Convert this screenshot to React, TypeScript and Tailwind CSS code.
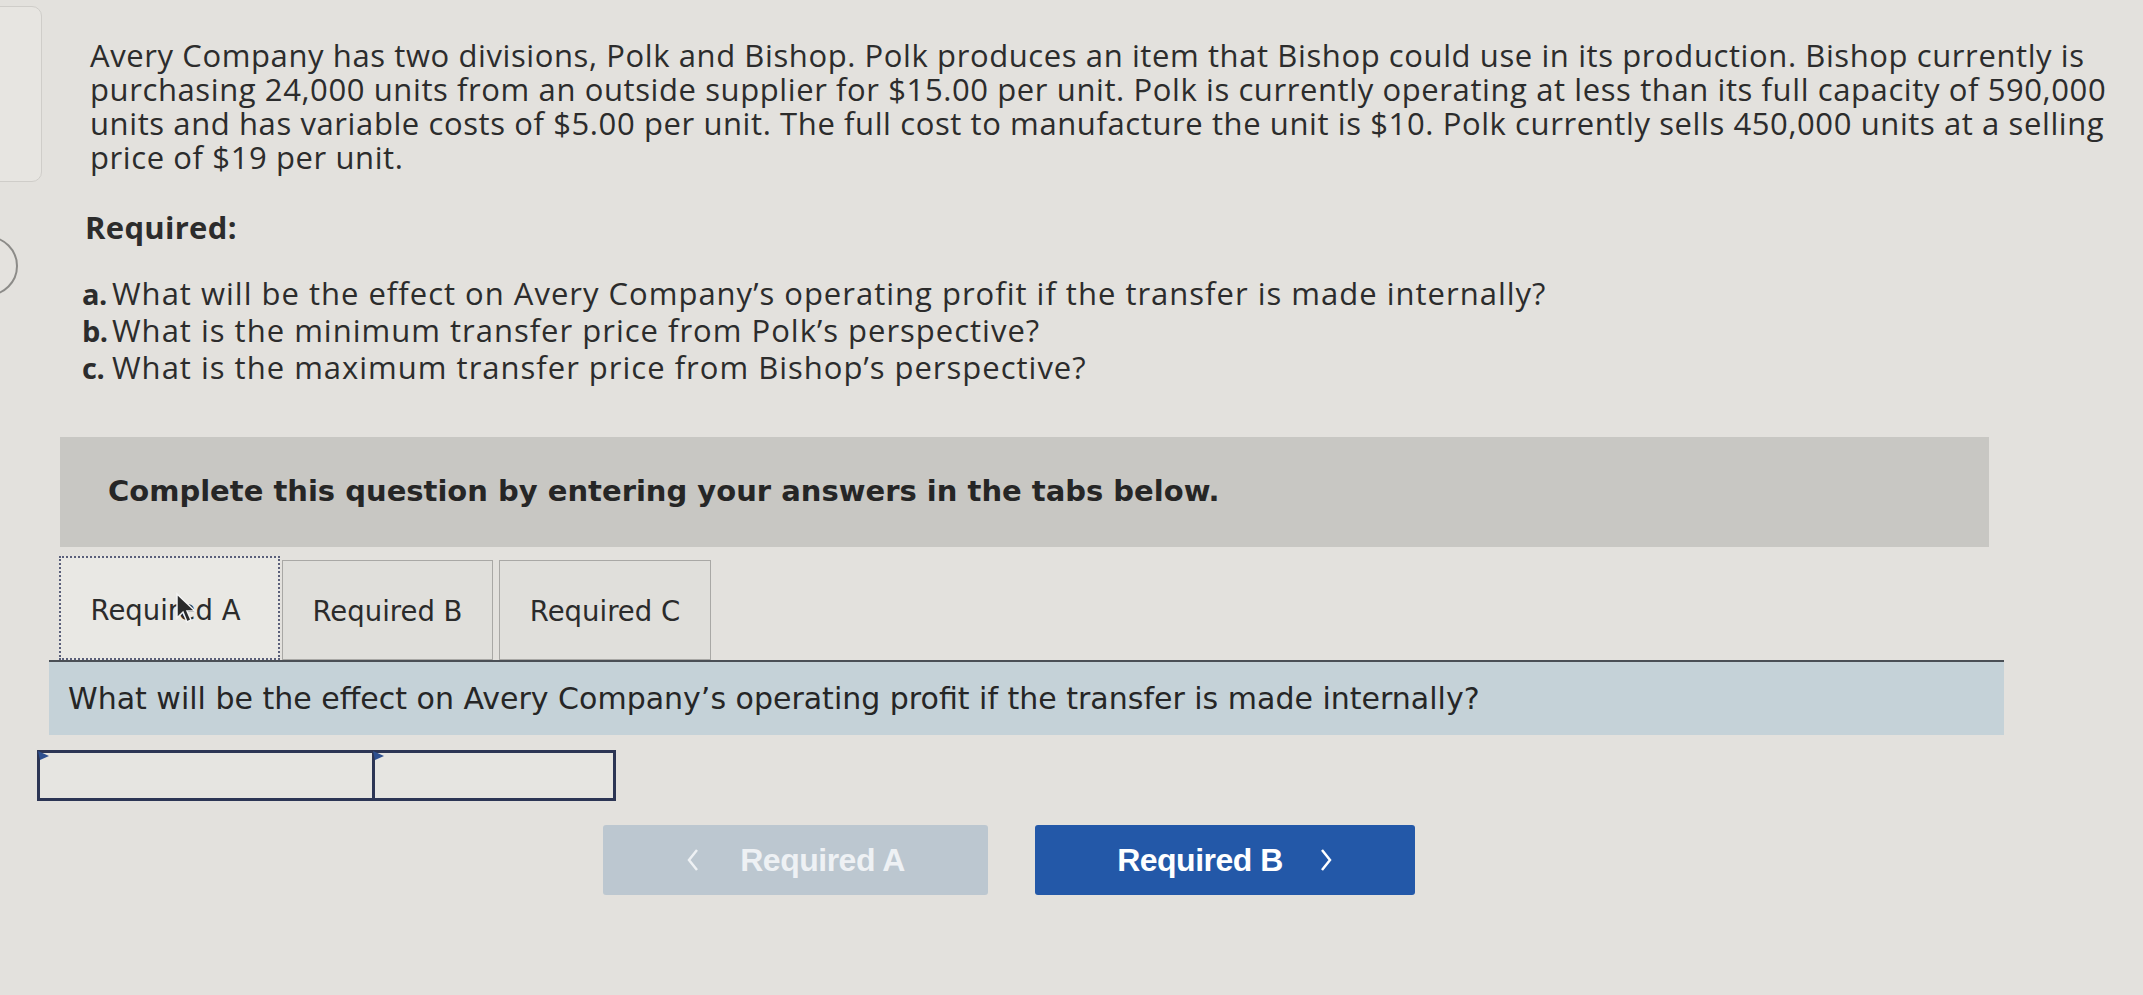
import React from 'react';

// Liste des questions demandées
const requiredItems = [
  { letter: 'a.', text: 'What will be the effect on Avery Company’s operating profit if the transfer is made internally?' },
  { letter: 'b.', text: 'What is the minimum transfer price from Polk’s perspective?' },
  { letter: 'c.', text: 'What is the maximum transfer price from Bishop’s perspective?' },
];

const tabs = ['Required A', 'Required B', 'Required C'];

const InputFlag = () => (
  <svg className="absolute -left-[2px] -top-[2px]" width="12" height="12" viewBox="0 0 12 12">
    <path d="M0 0 L11 5 L2 9 Z" fill="#2d4f8f" />
  </svg>
);

const App = () => {
  return (
    <div
      className="relative w-[2143px] h-[995px] overflow-hidden bg-[#e3e1dd] text-[#2c2c2c]"
      style={{ fontFamily: '"Open Sans", "Liberation Sans", sans-serif' }}
    >
      {/* bords de cartes voisines, coupés par l'écran */}
      <div className="absolute -left-[20px] top-[6px] w-[62px] h-[176px] rounded-[10px] border border-[#cfcdc9] bg-[#e7e5e1]" />
      <div className="absolute -left-[44px] top-[236px] w-[62px] h-[60px] rounded-full border-2 border-[#8c8b88] bg-[#e4e2de]" />

      {/* énoncé */}
      <p className="relative pl-[90px] pr-[2px] pt-[38px] w-full text-[31px] leading-[34px] tracking-[0.6px]">
        Avery Company has two divisions, Polk and Bishop. Polk produces an item that Bishop could use in its production. Bishop currently is purchasing 24,000 units from an outside supplier for $15.00 per unit. Polk is currently operating at less than its full capacity of 590,000 units and has variable costs of $5.00 per unit. The full cost to manufacture the unit is $10. Polk currently sells 450,000 units at a selling price of $19 per unit.
      </p>

      <p className="relative pl-[85px] mt-[36px] text-[31px] leading-[34px] tracking-[0.3px] font-bold">Required:</p>

      <ul className="mt-[31px] pl-[82px]">
        {requiredItems.map((item) => (
          <li key={item.letter} className="flex items-baseline text-[31px] leading-[37px] tracking-[1px]">
            <span className="font-bold w-[30px] text-[29px] tracking-[-0.5px]">{item.letter}</span>
            <span>{item.text}</span>
          </li>
        ))}
      </ul>

      {/* consigne */}
      <div
        className="mt-[51px] ml-[60px] w-[1929px] h-[110px] bg-[#c8c7c3] flex items-center pl-[48px] text-[29px] font-bold text-[#262626]"
        style={{ fontFamily: '"DejaVu Sans", Verdana, sans-serif' }}
      >
        Complete this question by entering your answers in the tabs below.
      </div>

      {/* onglets */}
      <div
        className="mt-[9px] ml-[59px] flex items-end h-[104px] text-[27.5px] text-[#2b2b2b]"
        style={{ fontFamily: '"DejaVu Sans", Verdana, sans-serif' }}
      >
        {tabs.map((tab, index) => (
          <div
            key={tab}
            className={
              index === 0
                ? 'relative h-[104px] w-[221px] flex items-center justify-center pt-[6px] pr-[8px] border-2 border-dotted border-[#5a5f7a] bg-[#e9e8e4]'
                : index === 1
                ? 'h-[100px] w-[211px] ml-[2px] flex items-center justify-center pt-[4px] border border-[#a9a8a5] bg-[#e0dfdb]'
                : 'h-[100px] w-[212px] ml-[6px] flex items-center justify-center pt-[4px] border border-[#a9a8a5] bg-[#e0dfdb]'
            }
          >
            {tab}
            {index === 0 && (
              <svg className="absolute left-[114px] top-[34px]" width="22" height="34" viewBox="0 0 22 34">
                <path d="M2 2 L2 26 L8 20 L12 30 L16 28 L12 19 L20 19 Z" fill="#2a2a2a" stroke="#f4f4f4" strokeWidth="1.5" />
              </svg>
            )}
          </div>
        ))}
      </div>

      {/* question active */}
      <div
        className="ml-[49px] w-[1955px] h-[75px] border-t-2 border-[#4a4f55] bg-[#c5d2d8] flex items-center pl-[19px] text-[30px] text-[#262626]"
        style={{ fontFamily: '"DejaVu Sans", Verdana, sans-serif' }}
      >
        What will be the effect on Avery Company’s operating profit if the transfer is made internally?
      </div>

      {/* champs de réponse */}
      <div className="mt-[15px] ml-[37px] w-[579px] h-[51px] flex border-[3px] border-[#2c3554] bg-[#e6e5e1]">
        <div className="relative w-[335px] h-full border-r-[3px] border-[#2c3554]">
          <InputFlag />
        </div>
        <div className="relative flex-1 h-full">
          <InputFlag />
        </div>
      </div>

      {/* navigation */}
      <div className="mt-[24px] ml-[603px] flex gap-[47px]" style={{ fontFamily: '"Liberation Sans", Arial, sans-serif' }}>
        <button className="w-[385px] h-[70px] rounded-[3px] bg-[#bcc7d0] text-[#eef1f4] text-[32px] font-bold flex items-center justify-center gap-[40px]">
          <svg width="14" height="26" viewBox="0 0 14 26">
            <path d="M11 3 L3 13 L11 23" fill="none" stroke="currentColor" strokeWidth="2.5" />
          </svg>
          <span className="tracking-[-0.5px]">Required A</span>
        </button>
        <button className="w-[380px] h-[70px] rounded-[3px] bg-[#2358a8] text-white text-[32px] font-bold flex items-center justify-center gap-[36px]">
          <span className="tracking-[-0.5px]">Required B</span>
          <svg width="14" height="26" viewBox="0 0 14 26">
            <path d="M3 3 L11 13 L3 23" fill="none" stroke="currentColor" strokeWidth="2.5" />
          </svg>
        </button>
      </div>
    </div>
  );
};

export default App;
